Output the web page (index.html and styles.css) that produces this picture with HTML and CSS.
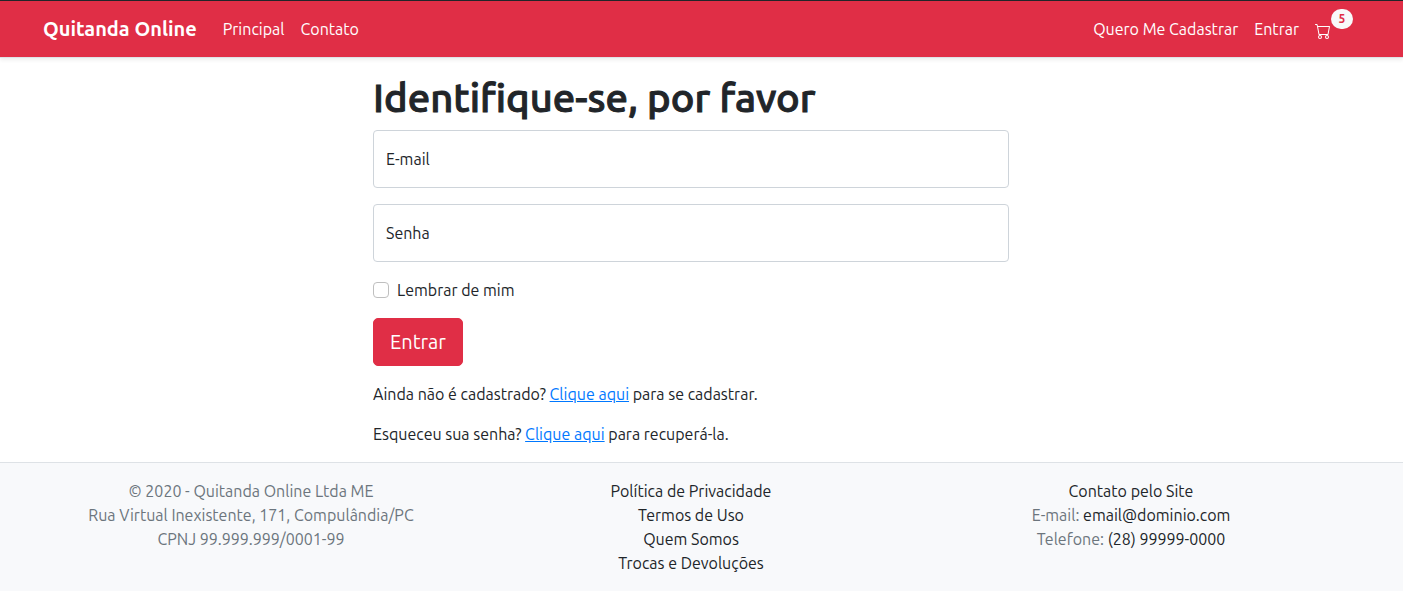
FILE: index.html
```html
<!DOCTYPE html>
<html lang="pt-BR">
<head>
  <meta charset="utf-8">
  <meta name="viewport" content="width=device-width, initial-scale=1">
  <title>Quitanda Online</title>
  <link rel="stylesheet" href="styles.css">
</head>
<body>
  <header class="navbar">
    <nav class="container navbar-inner">
      <a class="brand" href="#">Quitanda Online</a>
      <a class="nav-link" href="#">Principal</a>
      <a class="nav-link" href="#">Contato</a>
      <a class="nav-link nav-push" href="#">Quero Me Cadastrar</a>
      <a class="nav-link" href="#">Entrar</a>
      <a class="nav-link cart" href="#" aria-label="Carrinho">
        <svg class="cart-icon" viewBox="0 0 16 16" aria-hidden="true"><path d="M0 1.5A.5.5 0 0 1 .5 1H2a.5.5 0 0 1 .485.379L2.89 3H14.5a.5.5 0 0 1 .491.592l-1.5 8A.5.5 0 0 1 13 12H4a.5.5 0 0 1-.491-.408L2.01 3.607 1.61 2H.5a.5.5 0 0 1-.5-.5zM3.102 4l1.313 7h8.17l1.313-7H3.102zM5 12a2 2 0 1 0 0 4 2 2 0 0 0 0-4zm7 0a2 2 0 1 0 0 4 2 2 0 0 0 0-4zm-7 1a1 1 0 1 1 0 2 1 1 0 0 1 0-2zm7 0a1 1 0 1 1 0 2 1 1 0 0 1 0-2z"/></svg>
        <span class="badge">5</span>
      </a>
    </nav>
  </header>

  <main class="main">
    <div class="container">
      <form class="login">
        <h1 class="title">Identifique-se, por favor</h1>
        <div class="field">
          <input class="field-input" type="email" id="email">
          <label class="field-label" for="email">E-mail</label>
        </div>
        <div class="field">
          <input class="field-input" type="password" id="senha">
          <label class="field-label" for="senha">Senha</label>
        </div>
        <div class="check">
          <input class="check-input" type="checkbox" id="lembrar">
          <label for="lembrar">Lembrar de mim</label>
        </div>
        <button class="submit" type="submit">Entrar</button>
        <p class="hint">Ainda não é cadastrado? <a class="link" href="#">Clique aqui</a> para se cadastrar.</p>
        <p class="hint">Esqueceu sua senha? <a class="link" href="#">Clique aqui</a> para recuperá-la.</p>
      </form>
    </div>
  </main>

  <footer class="footer">
    <div class="container footer-grid">
      <div>
        © 2020 - Quitanda Online Ltda ME<br>
        Rua Virtual Inexistente, 171, Compulândia/PC<br>
        CPNJ 99.999.999/0001-99
      </div>
      <div>
        <a class="footer-link" href="#">Política de Privacidade</a><br>
        <a class="footer-link" href="#">Termos de Uso</a><br>
        <a class="footer-link" href="#">Quem Somos</a><br>
        <a class="footer-link" href="#">Trocas e Devoluções</a>
      </div>
      <div>
        <a class="footer-link" href="#">Contato pelo Site</a><br>
        E-mail: <a class="footer-link" href="#">email@dominio.com</a><br>
        Telefone: <a class="footer-link" href="#">(28) 99999-0000</a>
      </div>
    </div>
  </footer>
</body>
</html>
```

FILE: styles.css
```css
*, *::before, *::after { box-sizing: border-box; }

:root {
  --red: #e02e46;
  --ink: #212529;
  --gutter: 21px;
}

body {
  margin: 0;
  background: #fff;
  color: var(--ink);
  font-family: Ubuntu, "Noto Sans", sans-serif;
  font-size: 16px;
  line-height: 24px;
}

.navbar, .main, .footer { padding-right: var(--gutter); }

.container {
  max-width: 1320px;
  margin: 0 auto;
  padding: 0 12px;
}

.navbar {
  padding-top: 8px;
  padding-bottom: 8px;
  background: var(--red);
  border-top: 1px solid #212529;
  border-bottom: 1px solid #dee2e6;
  box-shadow: 0 2px 4px rgba(0, 0, 0, .075);
}

.navbar-inner {
  display: flex;
  align-items: center;
}

.brand {
  margin-right: 18px;
  color: #fff;
  font-size: 20px;
  font-weight: 700;
  line-height: 30px;
  text-decoration: none;
}

.nav-link {
  padding: 8px;
  color: #fff;
  text-decoration: none;
}

.nav-push { margin-left: auto; }

.cart {
  position: relative;
  display: flex;
  align-items: center;
  height: 40px;
}

.cart-icon {
  width: 16px;
  height: 16px;
  margin-top: 4px;
  fill: #fff;
}

.badge {
  position: absolute;
  top: 0;
  left: 24px;
  width: 22px;
  height: 20px;
  border-radius: 10px;
  background: #f8f9fa;
  color: var(--red);
  font-size: 12px;
  font-weight: 700;
  line-height: 20px;
  text-align: center;
}

.login {
  display: flex;
  flex-direction: column;
  align-items: flex-start;
  gap: 16px;
  width: 660px;
  max-width: 100%;
  margin: 0 auto;
  padding: 16px 12px;
}

.title {
  margin: 0 0 -8px;
  font-size: 40px;
  font-weight: 500;
  line-height: 48px;
  -webkit-text-stroke: 1px currentColor;
}

.field {
  display: grid;
  align-self: stretch;
  align-items: center;
}

.field-input, .field-label { grid-area: 1 / 1; }

.field-input {
  width: 100%;
  height: 58px;
  padding: 16px 12px;
  border: 1px solid #ced4da;
  border-radius: 4px;
  background: #fff;
  font: inherit;
}

.field-label {
  padding: 0 13px;
  pointer-events: none;
}

.check {
  display: flex;
  align-items: center;
  gap: 8px;
}

.check-input {
  width: 16px;
  height: 16px;
  margin: 0;
  appearance: none;
  border: 1px solid #bfbfbf;
  border-radius: 4px;
  background: #fff;
}

.check-input:checked { background: var(--red); }

.submit {
  padding: 8px 16px;
  border: 1px solid var(--red);
  border-radius: 5px;
  background: var(--red);
  color: #fff;
  font: inherit;
  font-size: 20px;
  line-height: 30px;
}

.hint { margin: 0; }

.link { color: #0078ff; }

.footer {
  padding-top: 16px;
  padding-bottom: 16px;
  border-top: 1px solid #dee2e6;
  background: #f8f9fb;
  color: #6c757d;
}

.footer-grid {
  display: grid;
  grid-template-columns: repeat(3, 1fr);
  padding: 0;
  text-align: center;
}

.footer-link {
  color: var(--ink);
  text-decoration: none;
}
```
